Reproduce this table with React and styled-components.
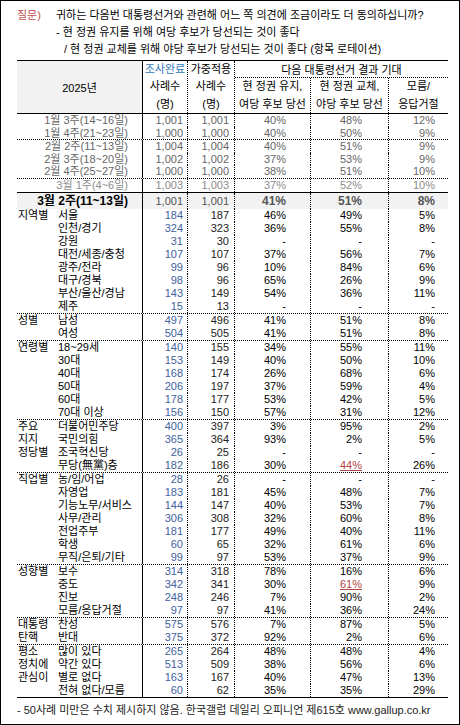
import React from "react";
import styled, { createGlobalStyle } from "styled-components";

const FONT = `"Liberation Sans", "Noto Sans CJK KR", sans-serif`;
const COLS = "126px 45px 47px 76px 78px 59px";
const PAD = [4, 5, 24, 26, 13];

const GlobalStyle = createGlobalStyle`
  html, body {
    margin: 0;
    padding: 0;
    background: #fff;
  }
  body {
    font-family: ${FONT};
  }
`;

const history = [
  { label: "1월 3주(14~16일)", v: ["1,001", "1,001", "40%", "48%", "12%"] },
  { label: "1월 4주(21~23일)", v: ["1,000", "1,000", "40%", "50%", "9%"] },
  { label: "2월 2주(11~13일)", v: ["1,004", "1,004", "40%", "51%", "9%"], rule: "dot" },
  { label: "2월 3주(18~20일)", v: ["1,002", "1,002", "37%", "53%", "9%"] },
  { label: "2월 4주(25~27일)", v: ["1,000", "1,000", "38%", "51%", "10%"] },
  { label: "3월 1주(4~6일)", v: ["1,003", "1,003", "37%", "52%", "10%"], rule: "dot", faded: true },
];

const current = { label: "3월 2주(11~13일)", v: ["1,001", "1,001", "41%", "51%", "8%"] };

// last entry (optional) = index of a highlighted value
const groups = [
  {
    name: ["지역별"],
    rows: [
      ["서울", "184", "187", "46%", "49%", "5%"],
      ["인천/경기", "324", "323", "36%", "55%", "8%"],
      ["강원", "31", "30", "-", "-", "-"],
      ["대전/세종/충청", "107", "107", "37%", "56%", "7%"],
      ["광주/전라", "99", "96", "10%", "84%", "6%"],
      ["대구/경북", "98", "96", "65%", "26%", "9%"],
      ["부산/울산/경남", "143", "149", "54%", "36%", "11%"],
      ["제주", "15", "13", "-", "-", "-"],
    ],
  },
  {
    name: ["성별"],
    rows: [
      ["남성", "497", "496", "41%", "51%", "8%"],
      ["여성", "504", "505", "41%", "51%", "8%"],
    ],
  },
  {
    name: ["연령별"],
    rows: [
      ["18~29세", "140", "155", "34%", "55%", "11%"],
      ["30대", "153", "149", "40%", "50%", "10%"],
      ["40대", "168", "174", "26%", "68%", "6%"],
      ["50대", "206", "197", "37%", "59%", "4%"],
      ["60대", "178", "177", "53%", "42%", "5%"],
      ["70대 이상", "156", "150", "57%", "31%", "12%"],
    ],
  },
  {
    name: ["주요", "지지", "정당별"],
    rows: [
      ["더불어민주당", "400", "397", "3%", "95%", "2%"],
      ["국민의힘", "365", "364", "93%", "2%", "5%"],
      ["조국혁신당", "26", "25", "-", "-", "-"],
      ["무당(無黨)층", "182", "186", "30%", "44%", "26%", 3],
    ],
  },
  {
    name: ["직업별"],
    rows: [
      ["농/임/어업", "28", "26", "-", "-", "-"],
      ["자영업", "183", "181", "45%", "48%", "7%"],
      ["기능노무/서비스", "144", "147", "40%", "53%", "7%"],
      ["사무/관리", "306", "308", "32%", "60%", "8%"],
      ["전업주부", "181", "177", "49%", "40%", "11%"],
      ["학생", "60", "65", "32%", "61%", "6%"],
      ["무직/은퇴/기타", "99", "97", "53%", "37%", "9%"],
    ],
  },
  {
    name: ["성향별"],
    rows: [
      ["보수", "314", "318", "78%", "16%", "6%"],
      ["중도", "342", "341", "30%", "61%", "9%", 3],
      ["진보", "248", "246", "7%", "90%", "2%"],
      ["모름/응답거절", "97", "97", "41%", "36%", "24%"],
    ],
  },
  {
    name: ["대통령", "탄핵"],
    rows: [
      ["찬성", "575", "576", "7%", "87%", "5%"],
      ["반대", "375", "372", "92%", "2%", "6%"],
    ],
  },
  {
    name: ["평소", "정치에", "관심이"],
    rows: [
      ["많이 있다", "265", "264", "48%", "48%", "4%"],
      ["약간 있다", "513", "509", "38%", "56%", "6%"],
      ["별로 없다", "163", "167", "40%", "47%", "13%"],
      ["전혀 없다/모름", "60", "62", "35%", "35%", "29%"],
    ],
  },
];

const Sheet = styled.div`
  width: 460px;
  height: 725px;
  box-sizing: border-box;
  border: 1px solid #000;
  padding: 6px 11px 0 16px;
  font-family: ${FONT};
  font-size: 11px;
  color: #000;
  background: #fff;
  overflow: hidden;
`;

const Question = styled.div`
  display: flex;
  line-height: 17px;
`;

const QLabel = styled.div`
  width: 39px;
  flex: none;
  color: #c0504d;
`;

const QLine = styled.div`
  white-space: nowrap;
  padding-left: ${(p) => p.$indent || 0}px;
`;

const Table = styled.div`
  width: 431px;
  margin: 2px 0 0 0;
  border-top: 1px solid #000;
  border-bottom: 1px solid #000;
`;

const Head = styled.div`
  display: grid;
  grid-template-columns: ${COLS};
  grid-template-rows: 17px 35px;
  border-bottom: 1px solid #000;
`;

const lineFor = (kind) =>
  kind === "solid" ? "1px solid #000" : kind === "dot" ? "1px dotted #000" : "none";

const HeadCell = styled.div`
  grid-column: ${(p) => p.$col};
  grid-row: ${(p) => p.$row};
  display: flex;
  flex-direction: column;
  align-items: center;
  justify-content: ${(p) => (p.$top ? "flex-start" : "center")};
  white-space: nowrap;
  border-right: ${(p) => lineFor(p.$line)};
  border-bottom: ${(p) => (p.$under ? "1px dotted #000" : "none")};
  background: ${(p) => (p.$shade ? "#f2f2f2" : "transparent")};
`;

const HeadLine = styled.div`
  height: ${(p) => p.$h || 17.5}px;
  line-height: ${(p) => p.$h || 17.5}px;
  color: ${(p) => p.$color || "#000"};
`;

const Row = styled.div`
  display: grid;
  grid-template-columns: ${COLS};
  height: ${(p) => p.$h}px;
  line-height: ${(p) => p.$h}px;
  border-top: ${(p) => lineFor(p.$rule)};
  background: ${(p) => (p.$shade ? "#f2f2f2" : "transparent")};
  color: ${(p) => p.$color || "#000"};
`;

const LabelCell = styled.div`
  display: flex;
  padding-left: 1px;
  border-right: 1px solid #000;
  white-space: nowrap;
  overflow: hidden;
`;

const Group = styled.span`
  width: 40px;
  flex: none;
`;

const PeriodCell = styled.div`
  text-align: right;
  padding-right: 14px;
  border-right: 1px solid #000;
  white-space: nowrap;
  font-weight: ${(p) => (p.$bold ? 700 : 400)};
  font-size: ${(p) => (p.$bold ? 12 : 11)}px;
  color: ${(p) => (p.$bold ? "#000" : "inherit")};
`;

const Num = styled.div`
  text-align: right;
  white-space: nowrap;
  padding-right: ${(p) => p.$pad}px;
  border-right: ${(p) => (p.$last ? "none" : "1px dotted #000")};
  color: ${(p) => p.$color || "inherit"};
  font-weight: ${(p) => (p.$bold ? 700 : 400)};
  font-size: ${(p) => (p.$bold ? 12 : 11)}px;
`;

const Mark = styled.span`
  color: #b04545;
  text-decoration: underline;
  text-underline-offset: 1px;
`;

const Footer = styled.div`
  margin-top: 5px;
  line-height: 14px;
  white-space: nowrap;
  color: #222;
`;

const numColor = (i, tone) => {
  if (tone) return undefined;
  if (i === 0) return "#4262a0";
  if (i === 1) return "#222";
  return "#000";
};

const Values = ({ v, tone, bold, mark }) =>
  v.map((val, i) => (
    <Num
      key={i}
      $pad={PAD[i]}
      $last={i === 4}
      $color={numColor(i, tone)}
      $bold={bold && i > 1}
    >
      {mark === i ? <Mark>{val}</Mark> : val}
    </Num>
  ));

const App = () => (
  <>
    <GlobalStyle />
    <Sheet>
      <Question>
        <QLabel>질문)</QLabel>
        <div>
          <QLine>귀하는 다음번 대통령선거와 관련해 어느 쪽 의견에 조금이라도 더 동의하십니까?</QLine>
          <QLine>- 현 정권 유지를 위해 여당 후보가 당선되는 것이 좋다</QLine>
          <QLine $indent={8}>/ 현 정권 교체를 위해 야당 후보가 당선되는 것이 좋다 (항목 로테이션)</QLine>
        </div>
      </Question>

      <Table>
        <Head>
          <HeadCell $col="1" $row="1 / 3" $line="solid" $shade>
            2025년
          </HeadCell>
          <HeadCell $col="2" $row="1 / 3" $line="dot" $top>
            <HeadLine $h={17} $color="#2e75b6">조사완료</HeadLine>
            <HeadLine>사례수</HeadLine>
            <HeadLine>(명)</HeadLine>
          </HeadCell>
          <HeadCell $col="3" $row="1 / 3" $line="dot" $top>
            <HeadLine $h={17}>가중적용</HeadLine>
            <HeadLine>사례수</HeadLine>
            <HeadLine>(명)</HeadLine>
          </HeadCell>
          <HeadCell $col="4 / 7" $row="1" $under>
            다음 대통령선거 결과 기대
          </HeadCell>
          <HeadCell $col="4" $row="2" $line="dot">
            <HeadLine>현 정권 유지,</HeadLine>
            <HeadLine>여당 후보 당선</HeadLine>
          </HeadCell>
          <HeadCell $col="5" $row="2" $line="dot">
            <HeadLine>현 정권 교체,</HeadLine>
            <HeadLine>야당 후보 당선</HeadLine>
          </HeadCell>
          <HeadCell $col="6" $row="2">
            <HeadLine>모름/</HeadLine>
            <HeadLine>응답거절</HeadLine>
          </HeadCell>
        </Head>

        {history.map((r) => (
          <Row key={r.label} $h={12.6} $rule={r.rule} $color={r.faded ? "#8c8c8c" : "#666"}>
            <PeriodCell>{r.label}</PeriodCell>
            <Values v={r.v} tone="muted" />
          </Row>
        ))}

        <Row $h={16} $rule="solid" $shade $color="#555">
          <PeriodCell $bold>{current.label}</PeriodCell>
          <Values v={current.v} tone="muted" bold />
        </Row>

        {groups.map((g, gi) =>
          g.rows.map((r, ri) => (
            <Row key={`${gi}-${ri}`} $h={13} $rule={ri === 0 && gi > 0 ? "dot" : undefined}>
              <LabelCell>
                <Group>{g.name[ri] || ""}</Group>
                <span>{r[0]}</span>
              </LabelCell>
              <Values v={r.slice(1, 6)} mark={r[6]} />
            </Row>
          ))
        )}
      </Table>

      <Footer>- 50사례 미만은 수치 제시하지 않음. 한국갤럽 데일리 오피니언 제615호 www.gallup.co.kr</Footer>
    </Sheet>
  </>
);

export default App;
